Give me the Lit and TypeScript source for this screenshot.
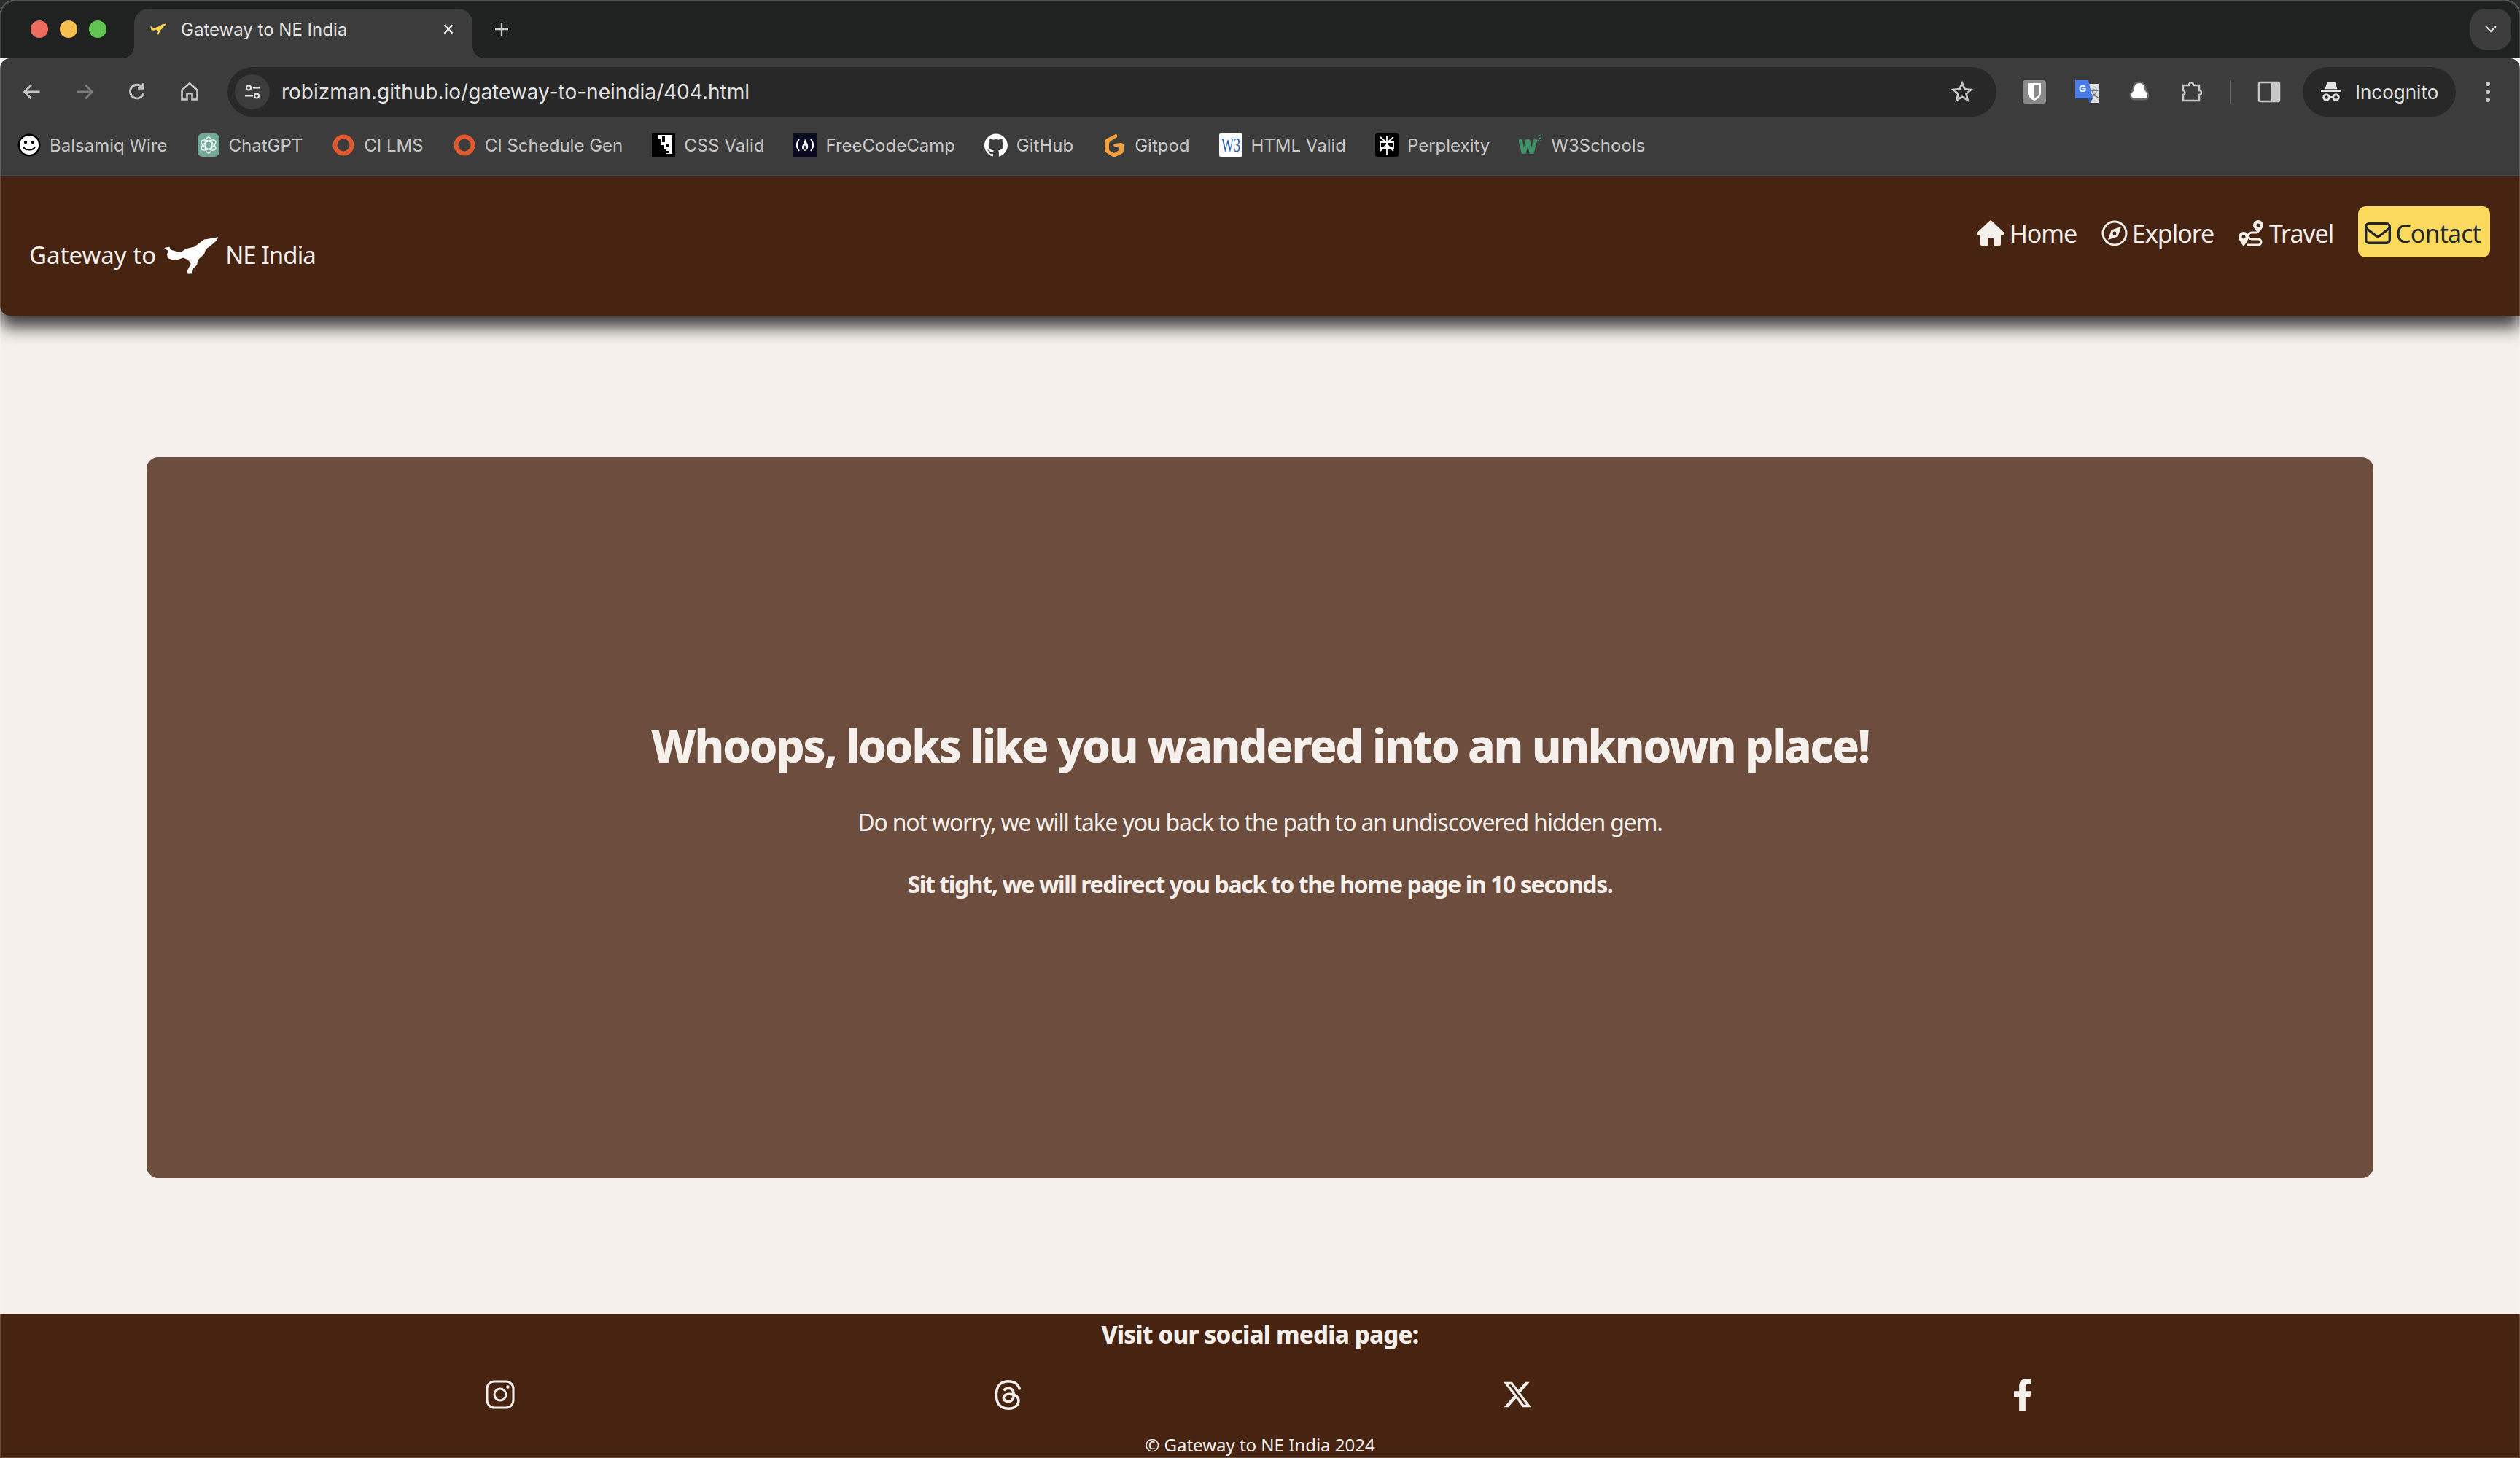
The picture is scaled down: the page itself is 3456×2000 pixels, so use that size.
import { LitElement, css, html, svg } from "lit";
import { customElement } from "lit/decorators.js";

const BIRD =
  "M47 107 55 98 72 96 78 108 100 114 120 117 140 103 175 95 195 80 215 65 250 60 272 55 268 68 240 92 222 105 215 125 190 148 185 170 170 185 165 205 148 207 145 195 160 165 150 150 130 140 100 150 85 148 65 142 62 125 68 112 55 104Z";

const GITHUB =
  "M12 .297c-6.63 0-12 5.373-12 12 0 5.303 3.438 9.8 8.205 11.385.6.113.82-.258.82-.577 0-.285-.01-1.04-.015-2.04-3.338.724-4.042-1.61-4.042-1.61C4.422 18.07 3.633 17.7 3.633 17.7c-1.087-.744.084-.729.084-.729 1.205.084 1.838 1.236 1.838 1.236 1.07 1.835 2.809 1.305 3.495.998.108-.776.417-1.305.76-1.605-2.665-.3-5.466-1.332-5.466-5.93 0-1.31.465-2.38 1.235-3.22-.135-.303-.54-1.523.105-3.176 0 0 1.005-.322 3.3 1.23.96-.267 1.98-.399 3-.405 1.02.006 2.04.138 3 .405 2.28-1.552 3.285-1.23 3.285-1.23.645 1.653.24 2.873.12 3.176.765.84 1.23 1.91 1.23 3.22 0 4.61-2.805 5.625-5.475 5.92.42.36.81 1.096.81 2.22 0 1.606-.015 2.896-.03 3.286 0 .315.21.69.825.57C20.565 22.092 24 17.592 24 12.297c0-6.627-5.373-12-12-12";

const bookmarks = [
  {
    name: "Balsamiq Wire",
    icon: svg`<circle cx="16" cy="16" r="15.5" fill="#000"/><circle cx="16" cy="16" r="13" fill="#fff"/><circle cx="11" cy="12" r="2.2" fill="#000"/><circle cx="21" cy="12" r="2.2" fill="#000"/><path d="M8 18c2 6 14 6 16 0" fill="none" stroke="#000" stroke-width="2.2"/>`,
  },
  {
    name: "ChatGPT",
    icon: svg`<rect x="1" width="30" height="32" rx="7" fill="#74a898"/><g fill="none" stroke="#e8f2ee" stroke-width="1.6"><ellipse cx="16" cy="16" rx="5" ry="11"/><ellipse cx="16" cy="16" rx="5" ry="11" transform="rotate(60 16 16)"/><ellipse cx="16" cy="16" rx="5" ry="11" transform="rotate(120 16 16)"/></g>`,
  },
  {
    name: "CI LMS",
    icon: svg`<circle cx="16" cy="16" r="11.5" fill="none" stroke="#e2592e" stroke-width="6"/>`,
  },
  {
    name: "CI Schedule Gen",
    icon: svg`<circle cx="16" cy="16" r="11.5" fill="none" stroke="#e2592e" stroke-width="6"/>`,
  },
  {
    name: "CSS Valid",
    icon: svg`<rect width="32" height="32" fill="#000"/><path d="M4 2h24v26h-8v-6h-4v-6h-4V8H8V2H4z" fill="#fff"/><path d="M14 4h4v8h-4zM20 14h4v4h-4zM18 24h6v3h-6z" fill="#000"/>`,
  },
  {
    name: "FreeCodeCamp",
    icon: svg`<rect width="32" height="32" fill="#0a0a23"/><g fill="none" stroke="#fff" stroke-width="2"><path d="M8 8c-4 5-4 11 0 16M24 8c4 5 4 11 0 16"/></g><path d="M16 7c1 5 5 7 4 12-.5 3-2 4-4 5-2-1-4-2-4-5 0-3 3-5 4-12z" fill="#fff"/><path d="M16 16c-1 2-2 3-1.5 5l1.5 2 1.500-2c.5-2-.5-3-1.500-5z" fill="#0a0a23"/>`,
  },
  {
    name: "GitHub",
    icon: svg`<path transform="scale(1.33)" d="${GITHUB}" fill="#fff"/>`,
  },
  {
    name: "Gitpod",
    icon: svg`<path d="M18 1c2 0 3 2 2 4l-8 5c-2 1-3 3-3 5v6c0 2 1 3 3 4l4 2 5-3c1-1 2-2 2-3v-3l-6 0c-2 0-3-3 0-4l8-1c2 0 4 1 4 3v7c0 2-1 4-3 5l-8 4c-1 .5-3 .5-4 0l-8-5c-2-1-3-3-3-5V12c0-2 1-4 3-5z" fill="#f2a03c"/>`,
  },
  {
    name: "HTML Valid",
    icon: svg`<rect width="32" height="32" rx="2" fill="#fff"/><text transform="translate(3 25) scale(1 1.5)" font-family="Liberation Serif, serif" font-size="18" fill="#1f5aa6">W3</text>`,
  },
  {
    name: "Perplexity",
    icon: svg`<rect width="32" height="32" rx="3" fill="#000"/><g fill="none" stroke="#fff" stroke-width="1.800"><path d="M16 3v26M7 5l9 8 9-8M7 24l9-9 9 9M7 12h18v8H7z"/></g>`,
  },
  {
    name: "W3Schools",
    icon: svg`<text x="0" y="27" font-family="Liberation Sans, sans-serif" font-weight="700" font-size="26" fill="#3f9168" stroke="#3f9168" stroke-width="1.500">W</text><text x="25" y="11" font-family="Liberation Sans, sans-serif" font-size="12" fill="#3f9168">3</text>`,
  },
];

const socials = [
  {
    w: 40,
    h: 40,
    box: "0 0 40 40",
    icon: svg`<g fill="none" stroke="currentColor" stroke-width="3"><rect x="2" y="2" width="36" height="36" rx="10"/><circle cx="20" cy="20" r="8"/></g><circle cx="30.500" cy="9.500" r="2.300" fill="currentColor"/>`,
  },
  {
    w: 41,
    h: 41,
    box: "0 0 24 24",
    icon: svg`<path fill="currentColor" d="M12.186 24h-.007c-3.581-.024-6.334-1.205-8.184-3.509C2.35 18.44 1.5 15.586 1.472 12.01v-.017c.03-3.579.879-6.43 2.525-8.482C5.845 1.205 8.6.024 12.18 0h.014c2.746.02 5.043.725 6.826 2.098 1.677 1.29 2.858 3.13 3.509 5.467l-2.04.569c-1.104-3.96-3.898-5.984-8.304-6.015-2.91.022-5.11.936-6.54 2.717C4.307 6.504 3.616 8.914 3.589 12c.027 3.086.718 5.496 2.057 7.164 1.43 1.783 3.631 2.698 6.54 2.717 2.623-.02 4.358-.631 5.8-2.045 1.647-1.613 1.618-3.593 1.09-4.798-.31-.71-.873-1.3-1.634-1.75-.192 1.352-.622 2.446-1.284 3.272-.886 1.102-2.14 1.704-3.73 1.79-1.202.065-2.361-.218-3.259-.801-1.063-.689-1.685-1.74-1.752-2.964-.065-1.19.408-2.285 1.33-3.082.88-.76 2.119-1.207 3.583-1.291a13.853 13.853 0 0 1 3.02.142c-.126-.742-.375-1.332-.75-1.757-.513-.586-1.308-.883-2.359-.89h-.029c-.844 0-1.992.232-2.721 1.32L7.734 7.847c.98-1.454 2.568-2.256 4.478-2.256h.044c3.194.02 5.097 1.975 5.287 5.388.108.046.216.094.321.142 1.49.7 2.58 1.761 3.154 3.07.797 1.82.871 4.79-1.548 7.158-1.85 1.81-4.094 2.628-7.277 2.65Zm1.003-11.69c-.242 0-.487.007-.739.021-1.836.103-2.98.946-2.916 2.143.067 1.256 1.452 1.839 2.784 1.767 1.224-.065 2.818-.543 3.086-3.71a10.5 10.5 0 0 0-2.215-.221z"/>`,
  },
  {
    w: 40,
    h: 38,
    box: "0 0 24 24",
    icon: svg`<path fill="currentColor" d="M18.901 1.153h3.68l-8.04 9.19L24 22.846h-7.406l-5.8-7.584-6.638 7.584H.474l8.6-9.83L0 1.154h7.594l5.243 6.932ZM17.61 20.644h2.039L6.486 3.24H4.298Z"/>`,
  },
  {
    w: 28,
    h: 45,
    box: "0 0 320 512",
    icon: svg`<path fill="currentColor" d="M279.14 288l14.22-92.66h-88.91v-60.13c0-25.35 12.42-50.06 52.24-50.06h40.42V6.26S260.43 0 225.36 0c-73.22 0-121.08 44.38-121.08 124.72v70.62H22.89V288h81.39v224h100.17V288z"/>`,
  },
];

@customElement("app-root")
export class AppRoot extends LitElement {
  renderTabStrip() {
    return html`
      <div class="tabstrip">
        <div class="lights">
          <span class="light red"></span>
          <span class="light yellow"></span>
          <span class="light green"></span>
        </div>
        <div class="tab">
          <svg class="favicon" viewBox="40 50 240 165"><path d="${BIRD}" fill="#fbd24e"/></svg>
          <span class="tab-title">Gateway to NE India</span>
          <svg class="tab-close" viewBox="0 0 16 16"><path d="M3 3l10 10M13 3L3 13" stroke="#e3e3e3" stroke-width="2"/></svg>
        </div>
        <svg class="new-tab" viewBox="0 0 20 20"><path d="M10 1v18M1 10h18" stroke="#c7c7c7" stroke-width="2.400"/></svg>
        <div class="tab-search">
          <svg viewBox="0 0 16 10" width="16" height="10"><path d="M1 1l7 7 7-7" fill="none" stroke="#e3e3e3" stroke-width="2"/></svg>
        </div>
      </div>
    `;
  }

  renderToolbar() {
    return html`
      <div class="toolbar">
        <div class="nav-buttons">
          <svg viewBox="0 0 24 24"><path d="M21 12H4M11 4l-8 8 8 8" fill="none" stroke="#c7c7c7" stroke-width="2.400"/></svg>
          <svg viewBox="0 0 24 24"><path d="M3 12h17M13 4l8 8-8 8" fill="none" stroke="#7b7b7b" stroke-width="2.400"/></svg>
          <svg viewBox="0 0 24 24"><path d="M19.500 14a8 8 0 1 1-1.500-7.500M19 2v6h-6" fill="none" stroke="#c7c7c7" stroke-width="2.400"/></svg>
          <svg viewBox="0 0 24 24"><path d="M3 21V10l9-8 9 8v11h-6v-7H9v7z" fill="none" stroke="#c7c7c7" stroke-width="2.200"/></svg>
        </div>
        <div class="omnibox">
          <span class="site-info">
            <svg viewBox="0 0 24 24" width="24" height="24"><g fill="none" stroke="#e3e3e3" stroke-width="2.200"><circle cx="7" cy="6.500" r="3"/><path d="M13 6.500h9M2 17.500h11"/><circle cx="18" cy="17.500" r="3"/></g></svg>
          </span>
          <span class="url">robizman.github.io/gateway-to-neindia/404.html</span>
          <svg class="star" viewBox="0 0 24 24" width="30" height="30"><path d="M12 2.500l2.800 6.400 6.900.7-5.200 4.600 1.500 6.800-6-3.500-6 3.500 1.500-6.800-5.200-4.600 6.900-.7z" fill="none" stroke="#c7c7c7" stroke-width="2.200"/></svg>
        </div>
        <div class="extensions">
          <svg viewBox="0 0 32 32"><rect width="32" height="32" rx="4" fill="#8a8a8a"/><path d="M7 4h18v13c0 5-4 9-9 11-5-2-9-6-9-11z" fill="#fff"/><path d="M16 6h7v11c0 4-3 6-7 8z" fill="#8a8a8a"/></svg>
          <svg viewBox="0 0 32 32"><path d="M14 5h18v26H20z" fill="#dcdcdc"/><path d="M0 0h18l6 25H0z" fill="#4a7de8"/><path d="M18 25h6l-4 7z" fill="#2f55b8"/><text x="5" y="16" font-family="Liberation Sans, sans-serif" font-weight="700" font-size="13" fill="#fff">G</text><text x="20" y="23" font-family="Noto Sans CJK SC, sans-serif" font-size="12" fill="#5e7480">文</text></svg>
          <svg viewBox="0 0 32 32"><path d="M16 4a7 7 0 0 1 7 7c0 3 1 4 3 6 2 3 1 8-3 8H9c-4 0-5-5-3-8 2-2 3-3 3-6a7 7 0 0 1 7-7z" fill="#fff" stroke="#686868" stroke-width="5" paint-order="stroke"/></svg>
          <svg viewBox="0 0 32 32"><path d="M4 7h8c0-5 6-5 6 0h8v7c4 0 4 6 0 6v8H4v-8c3 0 3-6 0-6z" fill="none" stroke="#c7c7c7" stroke-width="2.600"/></svg>
          <span class="divider"></span>
          <svg viewBox="0 0 32 32"><rect x="2" y="3" width="28" height="26" rx="2" fill="none" stroke="#c7c7c7" stroke-width="2.600"/><rect x="19" y="3" width="11" height="26" fill="#c7c7c7"/></svg>
        </div>
        <div class="incognito">
          <svg viewBox="0 0 32 32" width="30" height="30"><g fill="#e3e3e3"><path d="M10 2h12l3 10H7z"/><rect x="1" y="13" width="30" height="3"/></g><g fill="none" stroke="#e3e3e3" stroke-width="3"><circle cx="9" cy="24" r="4"/><circle cx="23" cy="24" r="4"/><path d="M13 24h6"/></g></svg>
          <span>Incognito</span>
        </div>
        <svg class="menu" viewBox="0 0 8 32" width="8" height="32"><circle cx="4" cy="5" r="3" fill="#c7c7c7"/><circle cx="4" cy="16" r="3" fill="#c7c7c7"/><circle cx="4" cy="27" r="3" fill="#c7c7c7"/></svg>
      </div>
    `;
  }

  renderBookmarks() {
    return html`
      <div class="bookmarks">
        ${bookmarks.map(
          (b) => html`
            <span class="bookmark">
              <svg viewBox="0 0 32 32" width="32" height="32">${b.icon}</svg>
              <span>${b.name}</span>
            </span>
          `
        )}
      </div>
    `;
  }

  renderHeader() {
    return html`
      <header class="site-header">
        <a class="brand">
          <span class="brand-first">Gateway to</span>
          <svg class="brand-logo" viewBox="47 55 225 152"><path d="${BIRD}" fill="#fff"/></svg>
          <span class="brand-last">NE India</span>
        </a>
        <nav class="site-nav">
          <a class="nav-link">
            <svg width="40" height="36" viewBox="0 0 40 36"><path fill="currentColor" d="M18.500 1 1.500 17c-1.300 1.200-.5 3 1.200 3H6v12.500A3 3 0 0 0 9 35.500h5.500a1.500 1.500 0 0 0 1.500-1.500v-8a2 2 0 0 1 2-2h4a2 2 0 0 1 2 2v8a1.500 1.500 0 0 0 1.500 1.500H31a3 3 0 0 0 3-3V20h3.300c1.700 0 2.500-1.800 1.200-3L21.500 1a2.200 2.200 0 0 0-3 0z"/></svg>
            Home
          </a>
          <a class="nav-link">
            <svg width="36" height="36" viewBox="0 0 36 36"><circle cx="18" cy="18" r="16" fill="none" stroke="currentColor" stroke-width="3"/><path fill="currentColor" fill-rule="evenodd" d="M27 9 22.500 22.500 9 27 13.500 13.500zM18 15.500a2.500 2.500 0 1 0 0 5 2.500 2.500 0 0 0 0-5z"/></svg>
            Explore
          </a>
          <a class="nav-link">
            <svg width="36" height="36" viewBox="0 0 36 36"><path fill="currentColor" fill-rule="evenodd" d="M27 0a7 7 0 0 1 7 7c0 3-4 7.500-7 10.500C24 14.500 20 10 20 7a7 7 0 0 1 7-7zm0 4.500a2.500 2.500 0 1 0 0 5 2.500 2.500 0 0 0 0-5zM7 16a7 7 0 0 1 7 7c0 3-4 9-7 13-3-4-7-10-7-13a7 7 0 0 1 7-7zm0 4.500a2.500 2.500 0 1 0 0 5 2.500 2.500 0 0 0 0-5z"/><path d="M26 17h-8a4.500 4.500 0 0 0 0 9h9a4 4 0 0 1 0 8H11" fill="none" stroke="currentColor" stroke-width="3"/></svg>
            Travel
          </a>
          <a class="nav-link contact">
            <svg width="36" height="30" viewBox="0 0 36 30"><rect x="1.700" y="1.700" width="32.600" height="26.600" rx="4" fill="none" stroke="currentColor" stroke-width="3.400"/><path d="M2 8l13.500 10.500a4 4 0 0 0 5 0L34 8" fill="none" stroke="currentColor" stroke-width="3.400"/></svg>
            Contact
          </a>
        </nav>
      </header>
    `;
  }

  render() {
    return html`
      <div class="window">
        ${this.renderTabStrip()} ${this.renderToolbar()} ${this.renderBookmarks()} ${this.renderHeader()}
        <main class="content">
          <section class="card">
            <h1>Whoops, looks like you wandered into an unknown place!</h1>
            <p>Do not worry, we will take you back to the path to an undiscovered hidden gem.</p>
            <p class="strong">Sit tight, we will redirect you back to the home page in 10 seconds.</p>
          </section>
        </main>
        <footer class="site-footer">
          <h2>Visit our social media page:</h2>
          <div class="socials">
            ${socials.map(
              (s) => html`<span class="social"
                ><svg width=${s.w} height=${s.h} viewBox=${s.box}>${s.icon}</svg></span
              >`
            )}
          </div>
          <small>© Gateway to NE India 2024</small>
        </footer>
      </div>
    `;
  }

  static styles = css`
    :host {
      display: block;
      width: 3456px;
      height: 2000px;
      background: #2b2b2b;
      font-family: "Noto Sans", sans-serif;
    }

    .window {
      position: relative;
      display: flex;
      flex-direction: column;
      height: 2000px;
      overflow: hidden;
      border-radius: 20px 20px 0 0;
      background: #f5f0eb;
    }

    .window::after {
      content: "";
      position: absolute;
      inset: 0;
      border: 2px solid rgba(255, 255, 255, 0.2);
      border-radius: 20px 20px 0 0;
      pointer-events: none;
      z-index: 5;
    }

    .tabstrip {
      display: flex;
      align-items: flex-start;
      flex: none;
      height: 80px;
      background: #202221;
      font-family: Inter, sans-serif;
    }

    .lights {
      display: flex;
      gap: 16px;
      width: 184px;
      padding: 28px 0 0 42px;
      box-sizing: border-box;
    }

    .light {
      width: 24px;
      height: 24px;
      border-radius: 50%;
    }

    .red {
      background: #ed6a5e;
    }

    .yellow {
      background: #f4bf4f;
    }

    .green {
      background: #61c554;
    }

    .tab {
      position: relative;
      display: flex;
      align-items: center;
      width: 464px;
      height: 68px;
      margin-top: 12px;
      padding: 0 24px 12px 21px;
      box-sizing: border-box;
      background: #3c3c3c;
      border-radius: 20px 20px 0 0;
      color: #e3e3e3;
      font-size: 24px;
    }

    .tab::before,
    .tab::after {
      content: "";
      position: absolute;
      bottom: 0;
      width: 16px;
      height: 16px;
    }

    .tab::before {
      left: -16px;
      background: radial-gradient(circle at 0 0, #202221 15.500px, #3c3c3c 16px);
    }

    .tab::after {
      right: -16px;
      background: radial-gradient(circle at 100% 0, #202221 15.500px, #3c3c3c 16px);
    }

    .favicon {
      width: 24px;
      height: 26px;
      margin-right: 19px;
    }

    .tab-title {
      flex: 1;
    }

    .tab-close {
      width: 18px;
      height: 18px;
    }

    .new-tab {
      width: 20px;
      height: 20px;
      margin: 30px 0 0 30px;
    }

    .tab-search {
      display: flex;
      align-items: center;
      justify-content: center;
      width: 56px;
      height: 56px;
      margin: 12px 12px 0 auto;
      background: #3c3c3c;
      border-radius: 20px;
    }

    .toolbar {
      display: flex;
      align-items: center;
      flex: none;
      height: 68px;
      padding: 12px 0 0;
      border-radius: 14px 14px 0 0;
      background: #3c3c3c;
      font-family: Inter, sans-serif;
    }

    .nav-buttons {
      display: flex;
      gap: 44px;
      width: 312px;
      padding-left: 30px;
      box-sizing: border-box;
    }

    .nav-buttons svg {
      width: 28px;
      height: 28px;
    }

    .omnibox {
      display: flex;
      align-items: center;
      width: 2426px;
      height: 68px;
      padding: 0 32px 0 10px;
      box-sizing: border-box;
      background: #282828;
      border-radius: 34px;
    }

    .site-info {
      display: flex;
      align-items: center;
      justify-content: center;
      width: 48px;
      height: 48px;
      margin-right: 16px;
      background: #3c3c3c;
      border-radius: 50%;
    }

    .url {
      flex: 1;
      color: #e3e3e3;
      font-size: 28px;
    }

    .extensions {
      display: flex;
      align-items: center;
      gap: 40px;
      width: 420px;
      padding-left: 36px;
      box-sizing: border-box;
    }

    .extensions svg {
      width: 32px;
      height: 32px;
    }

    .divider {
      width: 2px;
      height: 32px;
      margin: 0 -4px;
      background: #666;
    }

    .incognito {
      display: flex;
      align-items: center;
      gap: 18px;
      width: 210px;
      height: 68px;
      padding-left: 24px;
      box-sizing: border-box;
      background: #282828;
      border-radius: 34px;
      color: #e3e3e3;
      font-size: 26px;
    }

    .menu {
      margin-left: 40px;
    }

    .bookmarks {
      display: flex;
      align-items: center;
      gap: 40px;
      flex: none;
      height: 82px;
      padding: 0 0 2px 24px;
      box-sizing: border-box;
      background: #3c3c3c;
      border-bottom: 2px solid #4c4c4c;
      color: #c7c7c7;
      font-family: Inter, sans-serif;
      font-size: 24px;
    }

    .bookmark {
      display: flex;
      align-items: center;
      gap: 12px;
    }

    .site-header {
      position: relative;
      z-index: 2;
      display: flex;
      justify-content: space-between;
      align-items: flex-start;
      flex: none;
      height: 191px;
      padding-right: 41px;
      box-sizing: border-box;
      background: #472312;
      border-radius: 0 0 0 14px;
      box-shadow: 0 16px 22px rgba(28, 28, 30, 0.85);
      color: #f5f0eb;
    }

    .brand {
      display: flex;
      align-items: center;
      gap: 10px;
      margin-top: 81px;
      padding-left: 40px;
      font-size: 33px;
    }

    .brand-last {
      letter-spacing: -0.9px;
    }

    .brand-logo {
      width: 75px;
      height: 51px;
      margin-top: 2px;
    }

    .site-nav {
      display: flex;
      align-items: center;
      gap: 16px;
      margin-top: 41px;
    }

    .nav-link {
      display: flex;
      align-items: center;
      gap: 6px;
      height: 70px;
      padding: 3px 9px 0;
      box-sizing: border-box;
      border-radius: 10px;
      font-size: 34px;
      letter-spacing: -1.100px;
    }

    .contact {
      gap: 6px;
      margin-left: 9px;
      padding: 3px 13px 0 9px;
      letter-spacing: -0.900px;
      background: #fbd95c;
      color: #212529;
    }

    .content {
      flex: 1;
      display: flex;
      padding: 194px 201px 186px;
    }

    .card {
      flex: 1;
      display: flex;
      flex-direction: column;
      align-items: center;
      justify-content: center;
      padding-bottom: 22px;
      background: #6d4d3e;
      border-radius: 16px;
      color: #f5f0eb;
      text-align: center;
    }

    h1 {
      margin: 0 0 44px;
      font-size: 62px;
      font-weight: 800;
      letter-spacing: -2.400px;
      line-height: 1.2;
    }

    p {
      margin: 0 0 38px;
      font-size: 32px;
      letter-spacing: -1.200px;
      line-height: 47px;
    }

    .strong {
      margin: 0;
      font-weight: 700;
      letter-spacing: -1.400px;
    }

    .site-footer {
      position: relative;
      flex: none;
      height: 198px;
      padding-top: 8px;
      box-sizing: border-box;
      background: #472312;
      color: #f5f0eb;
      text-align: center;
    }

    h2 {
      margin: 0;
      font-size: 33px;
      font-weight: 800;
      letter-spacing: -0.800px;
      line-height: 42px;
    }

    .socials {
      display: grid;
      grid-template-columns: repeat(4, 1fr);
      width: 2784px;
      height: 46px;
      margin: 38px 0 0 338px;
    }

    .social {
      display: flex;
      align-items: center;
      justify-content: center;
    }

    .social:nth-child(3) {
      padding-left: 6px;
    }

    small {
      display: block;
      margin-top: 31px;
      font-size: 24px;
      line-height: 30px;
    }
  `;
}
